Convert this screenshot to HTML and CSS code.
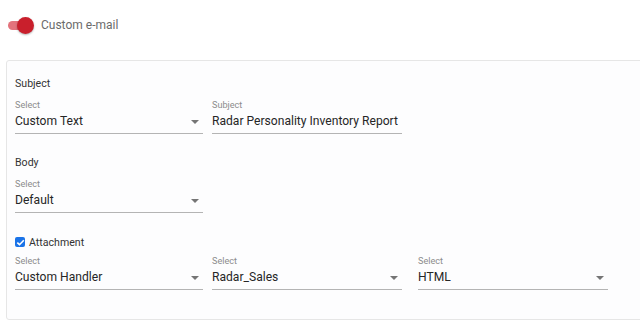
FILE: index.html
```html
<!DOCTYPE html>
<html lang="en">
<head>
    <meta charset="UTF-8">
    <meta name="viewport" content="width=device-width, initial-scale=1.0">
    <title>Custom e-mail</title>
    <link rel="stylesheet" href="styles.css">
</head>
<body>
    <!-- Toggle -->
    <div class="toggle-row">
        <span class="toggle">
            <span class="toggle-track"></span>
            <span class="toggle-thumb"></span>
        </span>
        <span class="toggle-label">Custom e-mail</span>
    </div>

    <!-- Settings panel -->
    <div class="panel">
        <div class="section-title">Subject</div>
        <div class="field-row">
            <div class="field field-first">
                <div class="field-label">Select</div>
                <div class="field-value">Custom Text<span class="arrow"></span></div>
            </div>
            <div class="field field-text">
                <div class="field-label">Subject</div>
                <div class="field-value">Radar Personality Inventory Report</div>
            </div>
        </div>

        <div class="section-title section-gap">Body</div>
        <div class="field-row">
            <div class="field field-first">
                <div class="field-label">Select</div>
                <div class="field-value">Default<span class="arrow"></span></div>
            </div>
        </div>

        <label class="check-row">
            <span class="checkbox">
                <svg width="9" height="9" viewBox="0 0 9 9"><path d="M1.3 4.6 L3.5 6.7 L7.8 2.2" fill="none" stroke="#fff" stroke-width="1.6"/></svg>
            </span>
            Attachment
        </label>
        <div class="field-row field-row-close">
            <div class="field field-first">
                <div class="field-label">Select</div>
                <div class="field-value">Custom Handler<span class="arrow"></span></div>
            </div>
            <div class="field field-second">
                <div class="field-label">Select</div>
                <div class="field-value">Radar_Sales<span class="arrow"></span></div>
            </div>
            <div class="field field-third">
                <div class="field-label">Select</div>
                <div class="field-value">HTML<span class="arrow"></span></div>
            </div>
        </div>
    </div>
</body>
</html>
```

FILE: styles.css
```css
body {
    font-family: Roboto, "Liberation Sans", sans-serif;
    margin: 0;
    padding: 0;
    background-color: #fff;
    color: #222;
}

.toggle-row {
    display: flex;
    align-items: center;
    height: 50px;
    padding-left: 8px;
}

.toggle {
    position: relative;
    width: 26px;
    height: 17px;
    margin-right: 7px;
}

.toggle-track {
    position: absolute;
    left: 0;
    top: 4px;
    width: 24px;
    height: 9px;
    border-radius: 5px;
    background-color: #e3737c;
}

.toggle-thumb {
    position: absolute;
    left: 9px;
    top: 0;
    width: 17px;
    height: 17px;
    border-radius: 50%;
    background-color: #c91f2c;
    box-shadow: 0 1px 2px rgba(0, 0, 0, 0.3);
}

.toggle-label {
    font-size: 12px;
    color: #6b6b6b;
}

.panel {
    margin-left: 6px;
    margin-top: 10px;
    margin-right: -20px;
    border: 1px solid #e6e6e6;
    border-radius: 3px;
    padding: 15px 0 29px 8px;
    background-color: #fdfdfe;
}

.section-title {
    font-size: 10.6px;
    line-height: 16px;
    color: #333;
    margin-bottom: 7px;
}

.section-gap {
    margin-top: 21px;
    margin-bottom: 7px;
}

.field-row {
    display: flex;
}

.field-row-close {
    margin-top: 5px;
}

.field {
    border-bottom: 1px solid #b4b4b4;
}

.field-first {
    width: 188px;
    margin-right: 9px;
}

.field-text,
.field-second {
    width: 190px;
    margin-right: 16px;
}

.field-third {
    width: 190px;
}

.field-label {
    font-size: 9.1px;
    line-height: 12px;
    color: #8c8c8c;
}

.field-value {
    position: relative;
    font-size: 12.1px;
    line-height: 20px;
    padding-bottom: 2px;
    color: #262626;
    white-space: nowrap;
}

.arrow {
    position: absolute;
    right: 4px;
    top: 9px;
    border-left: 4px solid transparent;
    border-right: 4px solid transparent;
    border-top: 4px solid #757575;
}

.check-row {
    display: flex;
    align-items: center;
    margin-top: 21px;
    height: 16px;
    font-size: 10.6px;
    color: #333;
}

.checkbox {
    display: flex;
    align-items: center;
    justify-content: center;
    width: 10px;
    height: 10px;
    border-radius: 2px;
    background-color: #1a73e8;
    margin-right: 4px;
}
```
